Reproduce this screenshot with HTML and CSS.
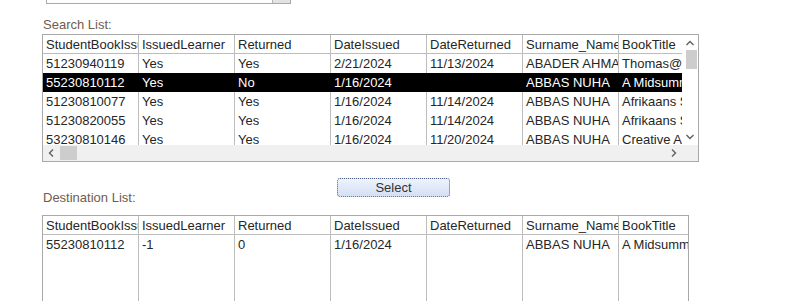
FILE: index.html
```html
<!DOCTYPE html>
<html>
<head>
    <title>Book Returns</title>
    <link rel="stylesheet" href="styles.css">
</head>
<body>
    <div class="form">
        <div class="combo"><div class="combo-btn"></div></div>

        <div class="list-label">Search List:</div>
        <div class="list search">
            <div class="sheet">
                <table>
                    <tr class="head">
                        <th>StudentBookIssueID</th>
                        <th>IssuedLearner</th>
                        <th>Returned</th>
                        <th>DateIssued</th>
                        <th>DateReturned</th>
                        <th>Surname_Name</th>
                        <th>BookTitle</th>
                    </tr>
                    <tr>
                        <td>51230940119</td><td>Yes</td><td>Yes</td><td>2/21/2024</td><td>11/13/2024</td><td>ABADER AHMAD</td><td>Thomas@School</td>
                    </tr>
                    <tr class="selected">
                        <td>55230810112</td><td>Yes</td><td>No</td><td>1/16/2024</td><td></td><td>ABBAS NUHA</td><td>A Midsummer Night's Dream</td>
                    </tr>
                    <tr>
                        <td>51230810077</td><td>Yes</td><td>Yes</td><td>1/16/2024</td><td>11/14/2024</td><td>ABBAS NUHA</td><td>Afrikaans Sonder Grense</td>
                    </tr>
                    <tr>
                        <td>51230820055</td><td>Yes</td><td>Yes</td><td>1/16/2024</td><td>11/14/2024</td><td>ABBAS NUHA</td><td>Afrikaans Sonder Grense</td>
                    </tr>
                    <tr>
                        <td>53230810146</td><td>Yes</td><td>Yes</td><td>1/16/2024</td><td>11/20/2024</td><td>ABBAS NUHA</td><td>Creative Arts</td>
                    </tr>
                </table>
            </div>
            <div class="vscroll">
                <div class="arrow">
                    <svg width="8" height="6" viewBox="0 0 8 6"><polyline points="0.5,5 4,1.5 7.5,5" fill="none" stroke="#606060" stroke-width="1.4"/></svg>
                </div>
                <div class="vthumb"></div>
                <div class="track"></div>
                <div class="arrow">
                    <svg width="8" height="6" viewBox="0 0 8 6"><polyline points="0.5,1 4,4.5 7.5,1" fill="none" stroke="#606060" stroke-width="1.4"/></svg>
                </div>
            </div>
            <div class="hscroll">
                <div class="arrow">
                    <svg width="6" height="8" viewBox="0 0 6 8"><polyline points="5,0.5 1.5,4 5,7.5" fill="none" stroke="#606060" stroke-width="1.4"/></svg>
                </div>
                <div class="hthumb"></div>
                <div class="track"></div>
                <div class="arrow">
                    <svg width="6" height="8" viewBox="0 0 6 8"><polyline points="1,0.5 4.5,4 1,7.5" fill="none" stroke="#606060" stroke-width="1.4"/></svg>
                </div>
                <div class="corner"></div>
            </div>
        </div>

        <div class="actions">
            <div class="list-label">Destination List:</div>
            <button class="select-btn">Select</button>
        </div>

        <div class="list dest">
            <div class="sheet">
                <table>
                    <tr class="head">
                        <th>StudentBookIssueID</th>
                        <th>IssuedLearner</th>
                        <th>Returned</th>
                        <th>DateIssued</th>
                        <th>DateReturned</th>
                        <th>Surname_Name</th>
                        <th>BookTitle</th>
                    </tr>
                    <tr>
                        <td>55230810112</td><td>-1</td><td>0</td><td>1/16/2024</td><td></td><td>ABBAS NUHA</td><td>A Midsummer Night's Dream</td>
                    </tr>
                    <tr class="filler">
                        <td></td><td></td><td></td><td></td><td></td><td></td><td></td>
                    </tr>
                </table>
            </div>
        </div>
    </div>
</body>
</html>
```

FILE: styles.css
```css
* {
    box-sizing: border-box;
}

body {
    margin: 0;
    font-family: "Liberation Sans", Arial, sans-serif;
    font-size: 13px;
    color: #262626;
    background-color: #fff;
    overflow: hidden;
}

.form {
    padding-left: 42px;
}

/* combo box, only its bottom edge is visible */
.combo {
    margin-left: 4px;
    width: 245px;
    height: 4px;
    border: 1px solid #a9a9a9;
    border-top: none;
    display: flex;
    justify-content: flex-end;
}

.combo-btn {
    width: 18px;
    background-color: #e3e3e3;
    border-left: 1px solid #b5b5b5;
}

.list-label {
    margin-top: 13px;
    height: 16px;
    line-height: 16px;
    padding-left: 1px;
    color: #6e5d4d;
}

.list {
    border: 1px solid #a9a9a9;
    background-color: #fff;
}

.list.search {
    margin-top: 1px;
    width: 657px;
    height: 128px;
    display: grid;
    grid-template-columns: 1fr 16px;
    grid-template-rows: 1fr 16px;
}

.list.dest {
    margin-top: 9px;
    width: 647px;
    height: 100px;
}

.sheet {
    overflow: hidden;
    height: 100%;
}

.sheet table {
    border-collapse: separate;
    border-spacing: 0;
    table-layout: fixed;
    width: 672px;
}

.dest .sheet table {
    height: 100%;
}

.sheet th, .sheet td {
    width: 96px;
    height: 19px;
    padding: 1px 3px 0;
    line-height: 18px;
    text-align: left;
    font-weight: normal;
    white-space: nowrap;
    overflow: hidden;
    border-right: 1px solid #bdbdbd;
}

.sheet th {
    line-height: 17px;
    border-bottom: 1px solid #bdbdbd;
}

.sheet .selected td {
    background-color: #000;
    color: #fff;
    border-right-color: #000;
}

.sheet .filler td {
    height: auto;
}

/* scroll bars */
.vscroll {
    display: flex;
    flex-direction: column;
    background-color: #fff;
}

.vscroll .arrow {
    height: 16px;
}

.vthumb {
    height: 19px;
    width: 11px;
    margin-left: 4px;
    margin-top: -1px;
    background-color: #cdcdcd;
}

.track {
    flex: 1;
}

.hscroll {
    grid-column: 1 / 3;
    display: flex;
    background-color: #f0f0f0;
}

.arrow {
    width: 16px;
    display: flex;
    align-items: center;
    justify-content: center;
}

.hthumb {
    width: 17px;
    margin: 1px 0 1px 1px;
    background-color: #cdcdcd;
}

.corner {
    width: 16px;
}

.actions {
    margin-top: 16px;
    height: 28px;
    display: grid;
    grid-template-columns: 295px 113px;
}

.actions .list-label {
    margin-top: 0;
    align-self: end;
}

.select-btn {
    align-self: start;
    height: 19px;
    padding: 0;
    font-family: inherit;
    font-size: 13px;
    line-height: 17px;
    color: #333;
    border: 1px dotted #4f6386;
    border-radius: 3px;
    background: linear-gradient(#eef3fc, #d3e0f5);
}
```
